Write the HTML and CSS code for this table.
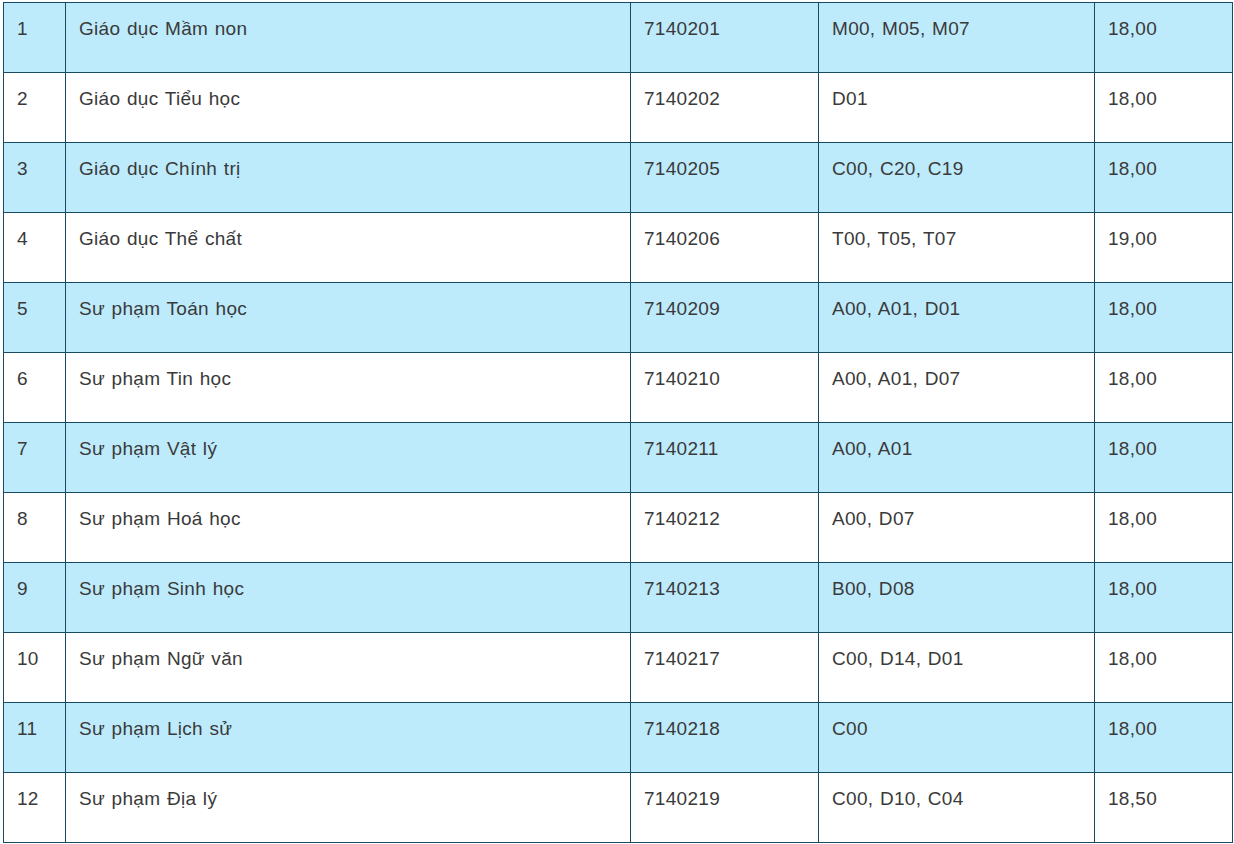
FILE: index.html
```html
<!DOCTYPE html>
<html lang="vi">
<head>
<meta charset="utf-8">
<link rel="stylesheet" href="styles.css">
</head>
<body>
<table class="score-table">
  <colgroup>
    <col class="c-stt"><col class="c-name"><col class="c-code"><col class="c-combo"><col class="c-score">
  </colgroup>
  <tbody>
    <tr class="alt"><td>1</td><td>Giáo dục Mầm non</td><td>7140201</td><td>M00, M05, M07</td><td>18,00</td></tr>
    <tr><td>2</td><td>Giáo dục Tiểu học</td><td>7140202</td><td>D01</td><td>18,00</td></tr>
    <tr class="alt"><td>3</td><td>Giáo dục Chính trị</td><td>7140205</td><td>C00, C20, C19</td><td>18,00</td></tr>
    <tr><td>4</td><td>Giáo dục Thể chất</td><td>7140206</td><td>T00, T05, T07</td><td>19,00</td></tr>
    <tr class="alt"><td>5</td><td>Sư phạm Toán học</td><td>7140209</td><td>A00, A01, D01</td><td>18,00</td></tr>
    <tr><td>6</td><td>Sư phạm Tin học</td><td>7140210</td><td>A00, A01, D07</td><td>18,00</td></tr>
    <tr class="alt"><td>7</td><td>Sư phạm Vật lý</td><td>7140211</td><td>A00, A01</td><td>18,00</td></tr>
    <tr><td>8</td><td>Sư phạm Hoá học</td><td>7140212</td><td>A00, D07</td><td>18,00</td></tr>
    <tr class="alt"><td>9</td><td>Sư phạm Sinh học</td><td>7140213</td><td>B00, D08</td><td>18,00</td></tr>
    <tr><td>10</td><td>Sư phạm Ngữ văn</td><td>7140217</td><td>C00, D14, D01</td><td>18,00</td></tr>
    <tr class="alt"><td>11</td><td>Sư phạm Lịch sử</td><td>7140218</td><td>C00</td><td>18,00</td></tr>
    <tr><td>12</td><td>Sư phạm Địa lý</td><td>7140219</td><td>C00, D10, C04</td><td>18,50</td></tr>
  </tbody>
</table>
</body>
</html>
```

FILE: styles.css
```css
html, body {
  margin: 0;
  background: #ffffff;
}
body {
  padding: 2px 0 0 3px;
  font-family: "Liberation Sans", Arial, sans-serif;
}
.score-table {
  border-collapse: collapse;
  table-layout: fixed;
  width: 1229px;
  color: #3a3a3a;
  font-size: 19px;
  letter-spacing: 0.3px;
  word-spacing: 1px;
}
.c-stt { width: 62px; }
.c-name { width: 565px; }
.c-code { width: 188px; }
.c-combo { width: 276px; }
.c-score { width: 138px; }
.score-table td {
  border: 1px solid #174b63;
  height: 69px;
  box-sizing: border-box;
  padding: 12px 13px 0 13px;
  line-height: 27px;
  vertical-align: top;
  white-space: nowrap;
}
.score-table tr {
  height: 70px;
}
.score-table tr.alt td {
  background: #bdebfc;
}
```
